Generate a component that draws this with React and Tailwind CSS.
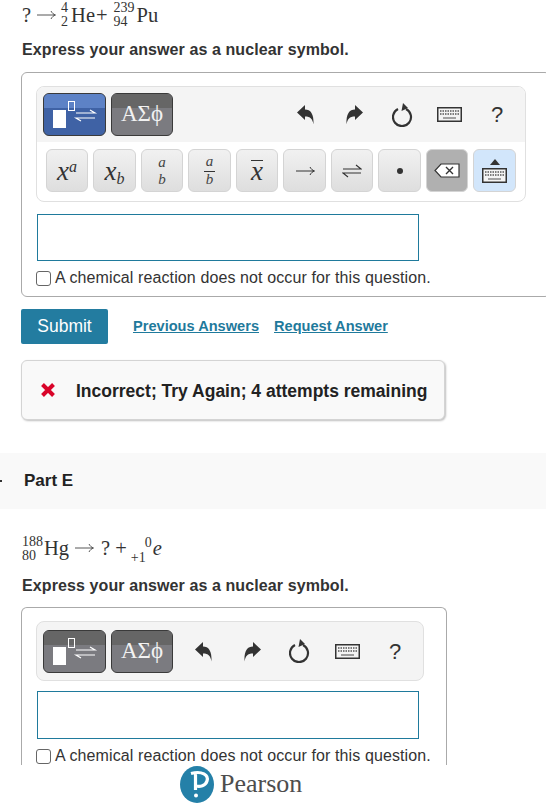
function Stack({ top, bot, cls = "" }) {
  return (
    <span className={"inline-flex shrink-0 flex-col items-start text-[14px] leading-[14px] " + cls}>
      <span>{top}</span>
      <span>{bot}</span>
    </span>
  );
}
const MathArrow = ({ cls = "" }) => (
  <svg width="19" height="10" viewBox="0 0 19 10" className={cls}>
    <path d="M0 5 H18 M14 1 C15 3 16.5 4.4 18.5 5 C16.5 5.6 15 7 14 9" fill="none" stroke="#444" strokeWidth="0.9" />
  </svg>
);
const Undo = ({ flip }) => (
  <svg width="17" height="21" viewBox="0 0 17 21" className={"block " + (flip ? "-scale-x-100" : "")}>
    <path d="M0 8.5 L8 1 V5.5 C13.5 5.5 17 9.5 16.5 20.5 C15.5 15 13.5 12.5 8 12.5 V16 Z" fill="#333" />
  </svg>
);
const Reset = () => (
  <svg width="21" height="24" viewBox="0 0 21 24" className="block">
    <path d="M6 6 A9 9 0 1 0 14 6" fill="none" stroke="#333" strokeWidth="2.2" />
    <path d="M9.5 8 L16 5 L11 0 Z" fill="#333" />
  </svg>
);
const Keys = () => (
  <svg width="25" height="15" viewBox="0 0 25 15" className="block">
    <rect x="0.75" y="0.75" width="23.5" height="13.5" fill="#f4f4f4" stroke="#333" strokeWidth="1.5" />
    <path d="M3 4 H22 M3 7 H22" stroke="#555" strokeWidth="1.6" strokeDasharray="1.5 1" />
    <path d="M6 11 H19" stroke="#888" strokeWidth="1.6" />
  </svg>
);
const TemplateIcon = () => (
  <svg width="61" height="41" viewBox="0 0 61 41" className="block">
    <rect x="9" y="16" width="13" height="18" fill="#fff" />
    <rect x="24.5" y="7.5" width="6" height="9" fill="none" stroke="#fff" strokeWidth="1" />
    <path d="M32 19 H51 L46 16 M51 24 H32 L37 27" fill="none" stroke="#fff" strokeWidth="1.2" />
  </svg>
);
function ToolTab({ blue, wide, children }) {
  return (
    <div className={"relative flex h-[43px] items-center justify-center overflow-hidden rounded-[6px] border border-[#3a3a3a] " + (wide ? "w-[63px] " : "w-[62px] ") + (blue ? "bg-[#3f62a5]" : "bg-[#7b7b80]")}>
      <div className={"absolute inset-x-0 top-0 h-[14px] " + (blue ? "bg-[#5d82c6]" : "bg-[#666666]")} />
      <div className="relative">{children}</div>
    </div>
  );
}
function TopBar({ blue }) {
  return (
    <div className="flex gap-[5px]">
      <ToolTab blue={blue} wide><TemplateIcon /></ToolTab>
      <ToolTab>
        <span className="font-['Liberation_Serif',serif] text-[23px] leading-[26px] text-[#f2f2f2]">ΑΣϕ</span>
      </ToolTab>
    </div>
  );
}
const KeyBtn = ({ children, w = "w-[42px]", bg = "bg-gradient-to-b from-[#f1f1f1] to-[#dedede]" }) => (
  <div className={"flex h-[43px] items-center justify-center rounded-[6px] border border-[#d4d4d4] font-['Liberation_Serif',serif] text-[#333] " + w + " " + bg}>
    {children}
  </div>
);
const Frac = ({ line }) => (
  <span className="flex flex-col items-center text-[15px] italic leading-[15px] text-[#444]">
    <span className={line ? "border-b border-[#333] px-0.5 pb-[2px] leading-[15px]" : "mb-[2px]"}>a</span>
    <span>b</span>
  </span>
);
const Answer = ({ h }) => (
  <div className={"w-[382px] border border-[#1f7a9c] bg-white " + h} />
);
const NoReact = () => (
  <div className="flex items-center text-[16px] leading-[22px] tracking-[0.11px] text-[#333]">
    <span className="mr-[4px] h-[15px] w-[15px] rounded-[3px] border border-[#666] bg-white" />
    <span>A chemical reaction does not occur for this question.</span>
  </div>
);
const Heading = () => (
  <div className="pl-[22px] text-[16px] font-bold leading-[20px] tracking-[0.1px] text-[#333]">Express your answer as a nuclear symbol.</div>
);
const Icons = ({ first, second, third, fourth, fifth }) => (
  <div className="flex items-center">
    <span className={first}><Undo /></span>
    <span className={second}><Undo flip /></span>
    <span className={third}><Reset /></span>
    <span className={fourth}><Keys /></span>
    <span className={fifth + " text-[22px] text-[#333]"}>?</span>
  </div>
);

export default function App() {
  return (
    <div className="relative h-[808px] w-[546px] overflow-hidden bg-white font-['Liberation_Sans',Arial,sans-serif] text-[#222]">
      <div className="h-[40px] pl-[22px] pt-[2px] font-['Liberation_Serif',serif] text-[20.5px] text-[#333]">
        <div className="flex h-[26px] items-center">
          <span>?</span>
          <MathArrow cls="ml-[6px]" />
          <Stack top="4" bot="2" cls="ml-[5px]" />
          <span className="ml-[3px]">He</span>
          <span className="ml-[1px]">+</span>
          <Stack top="239" bot="94" cls="ml-[6px]" />
          <span className="ml-[2px]">Pu</span>
        </div>
      </div>
      <Heading />
      {/* first card */}
      <div className="ml-[21px] mt-[12px] h-[225px] w-[530px] rounded-[6px] border border-[#aaaaaa] pl-[14px] pt-[13px]">
        <div className="h-[116px] w-[490px] overflow-hidden rounded-[8px] border border-[#e0e0e0]">
          <div className="flex h-[55px] items-center bg-[#f4f4f4] pl-[6px]">
            <TopBar blue />
            <Icons first="ml-[124px]" second="ml-[32px]" third="ml-[29px]" fourth="ml-[24px]" fifth="ml-[29px]" />
          </div>
          <div className="flex gap-[5px] pl-[9px] pt-[7px]">
            <KeyBtn><span className="text-[27px] italic leading-[24px]">x<sup className="text-[16px]">a</sup></span></KeyBtn>
            <KeyBtn w="w-[43px]"><span className="text-[27px] italic leading-[24px]">x<sub className="text-[16px]">b</sub></span></KeyBtn>
            <KeyBtn><Frac /></KeyBtn>
            <KeyBtn w="w-[43px]"><Frac line /></KeyBtn>
            <KeyBtn><span className="border-t border-[#333] text-[27px] italic leading-[20px]">x</span></KeyBtn>
            <KeyBtn w="w-[43px]">
              <svg width="20" height="10" viewBox="0 0 20 10"><path d="M1 5 H19 M15 1 C16 3 17.5 4.4 19.5 5 C17.5 5.6 16 7 15 9" fill="none" stroke="#333" strokeWidth="1" /></svg>
            </KeyBtn>
            <KeyBtn>
              <svg width="20" height="14" viewBox="0 0 20 14"><path d="M1 5 H19 L14 1 M19 9 H1 L6 13" fill="none" stroke="#333" strokeWidth="1.1" /></svg>
            </KeyBtn>
            <KeyBtn w="w-[43px]"><span className="h-[6px] w-[6px] rounded-full bg-[#333]" /></KeyBtn>
            <KeyBtn bg="bg-[#b0b0b0]">
              <svg width="26" height="15" viewBox="0 0 26 15"><path d="M7 1 H25 V14 H7 L1 7.5 Z" fill="#fff" stroke="#333" strokeWidth="1.2" /><path d="M12 4 L19 11 M19 4 L12 11" stroke="#333" strokeWidth="1.4" /></svg>
            </KeyBtn>
            <KeyBtn w="w-[43px]" bg="bg-[#d2e6fb]">
              <span className="flex flex-col items-center gap-[3px]">
                <svg width="10" height="6" viewBox="0 0 10 6" className="block"><path d="M0 6 L5 0 L10 6 Z" fill="#333" /></svg>
                <Keys />
              </span>
            </KeyBtn>
          </div>
        </div>
        <div className="ml-[1px] mt-[12px]"><Answer h="h-[47px]" /></div>
        <div className="mt-[6px]"><NoReact /></div>
      </div>
      {/* actions */}
      <div className="ml-[21px] mt-[12px] flex items-center">
        <div className="flex h-[35px] w-[87px] items-center justify-center rounded-[2px] bg-[#237ca0] text-[17.5px] text-white">Submit</div>
        <span className="ml-[25px] text-[14.6px] font-bold text-[#1f7a9c] underline">Previous Answers</span>
        <span className="ml-[15px] text-[14.6px] font-bold text-[#1f7a9c] underline">Request Answer</span>
      </div>
      {/* feedback */}
      <div className="ml-[21px] mt-[16px] flex h-[60px] w-[424px] items-center rounded-[6px] border border-[#d4d4d4] bg-[#f9f9f9] pl-[18px] shadow-[1px_1px_2px_rgba(0,0,0,0.25)]">
        <svg width="16" height="16" viewBox="0 0 16 16"><path d="M2.5 2.5 L13.5 13.5 M13.5 2.5 L2.5 13.5" stroke="#d90429" strokeWidth="4" /></svg>
        <span className="ml-[20px] pt-[2px] text-[17.5px] font-bold text-[#222]">Incorrect; Try Again; 4 attempts remaining</span>
      </div>
      {/* part band */}
      <div className="mt-[33px] flex h-[56px] items-center bg-[#f9f9f9]">
        <span className="h-[2px] w-[2px] bg-[#333]" />
        <span className="ml-[22px] text-[17px] font-bold text-[#222]">Part E</span>
      </div>
      <div className="flex h-[56px] items-end pb-[4px] pl-[22px] font-['Liberation_Serif',serif] text-[20.5px] text-[#333]">
        <div className="flex h-[26px] items-center">
          <Stack top="188" bot="80" cls="translate-y-[1px]" />
          <span className="ml-[1px]">Hg</span>
          <MathArrow cls="ml-[6px]" />
          <span className="ml-[7px]">?</span>
          <span className="ml-[5px]">+</span>
          <span className="ml-[4px] inline-flex translate-y-[2px] flex-col items-start text-[14px] leading-[15px]">
            <span className="ml-[14px]">0</span>
            <span>+1</span>
          </span>
          <span className="ml-[1px] italic">e</span>
        </div>
      </div>
      <div className="mt-[11px]"><Heading /></div>
      {/* second card */}
      <div className="ml-[21px] mt-[11px] h-[175px] w-[426px] rounded-t-[6px] border border-b-0 border-[#aaaaaa] pl-[14px] pt-[13px]">
        <div className="flex h-[60px] w-[388px] items-center rounded-[8px] border border-[#e0e0e0] bg-[#f4f4f4] pl-[6px]">
          <TopBar />
          <Icons first="ml-[22px]" second="ml-[32px]" third="ml-[28px]" fourth="ml-[25px]" fifth="ml-[29px]" />
        </div>
        <div className="ml-[1px] mt-[10px]"><Answer h="h-[48px]" /></div>
        <div className="mt-[6px]"><NoReact /></div>
      </div>
      {/* footer */}
      <div className="absolute inset-x-0 bottom-0 flex h-[43px] items-start bg-white pl-[180px]">
        <svg width="34" height="37" viewBox="0 0 34 37" className="mt-[1px] shrink-0">
          <ellipse cx="17" cy="18.5" rx="17" ry="18.5" fill="#2480a8" />
          <path d="M11 7.5 C22 4.5 29 9 27 15 C25.5 20 20 21 16 20 M15.5 8 V24" fill="none" stroke="#fff" strokeWidth="3.2" />
          <circle cx="16" cy="29.5" r="2" fill="#fff" />
        </svg>
        <span className="ml-[6px] mt-[3px] font-['Liberation_Serif',serif] text-[26px] leading-[32px] text-[#4d4d4d]">Pearson</span>
      </div>
    </div>
  );
}
